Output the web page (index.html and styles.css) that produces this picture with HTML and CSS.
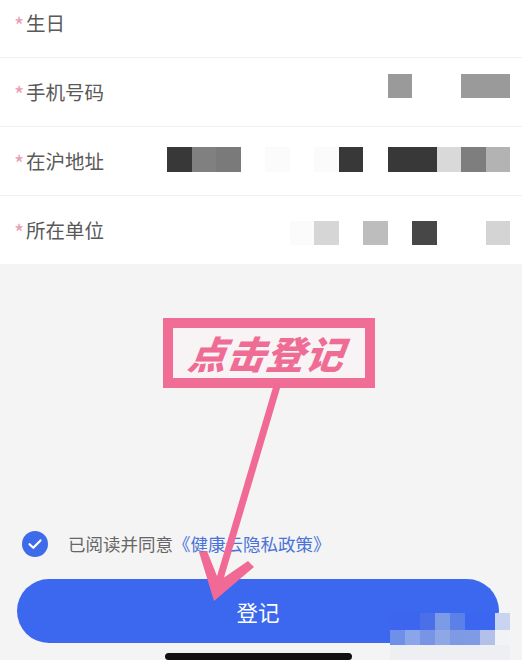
FILE: index.html
```html
<!DOCTYPE html>
<html lang="zh-CN">
<head>
<meta charset="utf-8">
<title>登记</title>
<link rel="stylesheet" href="styles.css">
</head>
<body>
<div class="page">
  <div class="form">
    <div class="row">
      <div class="label"><span class="req">*</span>生日</div>
    </div>
    <div class="row">
      <div class="label"><span class="req">*</span>手机号码</div>
      <div class="cells cells-r2">
        <i></i><i></i><i></i><i></i><i></i><i></i><i></i><i></i><i></i><i class="g9a"></i><i></i><i></i><i class="g9a"></i><i class="g9a"></i>
      </div>
    </div>
    <div class="row">
      <div class="label"><span class="req">*</span>在沪地址</div>
      <div class="cells cells-r3">
        <i class="g38"></i><i class="g80"></i><i class="g7a"></i><i></i><i class="gfa"></i><i></i><i class="gfa"></i><i class="g38"></i><i></i><i class="g38"></i><i class="g38"></i><i class="gd9"></i><i class="g7e"></i><i class="gb3"></i>
      </div>
    </div>
    <div class="row">
      <div class="label"><span class="req">*</span>所在单位</div>
      <div class="cells cells-r4">
        <i></i><i></i><i></i><i></i><i></i><i class="gfa"></i><i class="gd6"></i><i></i><i class="gbd"></i><i></i><i class="g47"></i><i></i><i></i><i class="gd4"></i>
      </div>
    </div>
  </div>

  <div class="agree">
    <span class="check">
      <svg viewBox="0 0 26 26" width="26" height="26"><circle cx="13" cy="13" r="13" fill="#3e6be9"/><path d="M7.5 13.2l3.8 3.6 7.2-7.4" fill="none" stroke="#fff" stroke-width="2.2" stroke-linecap="round" stroke-linejoin="round"/></svg>
    </span>
    <span class="agree-text">已阅读并同意<a class="link">《健康云隐私政策》</a></span>
  </div>

  <div class="btn">登记</div>
  <div class="home"></div>

  <div class="callout"><span>点击登记</span></div>

  <div class="mosaic">
    <i class="b1"></i><i class="b1"></i><i class="b2"></i><i class="b3"></i><i class="b4"></i><i class="b1"></i><i class="b1"></i><i class="b5"></i><i></i>
    <i class="c1"></i><i class="c2"></i><i class="c3"></i><i class="c4"></i><i class="c5"></i><i class="c6"></i><i class="c7"></i><i class="c8"></i><i></i>
    <i class="d1"></i><i class="d1"></i><i class="d1"></i><i class="d1"></i><i class="d1"></i><i class="d1"></i><i class="d1"></i><i class="d1"></i><i></i>
  </div>

  <svg class="arrow" viewBox="0 0 522 660" width="522" height="660">
    <line x1="277" y1="386" x2="216" y2="592" stroke="#f06a95" stroke-width="7" stroke-linecap="round"/>
    <polygon points="199,552 207,551 219,581 248,561 254,567 214,601" fill="#f06a95"/>
  </svg>
</div>
</body>
</html>
```
FILE: styles.css
```css
* { box-sizing: border-box; }
html, body { margin: 0; padding: 0; }
body {
  width: 522px;
  height: 660px;
  overflow: hidden;
  background: #f4f4f4;
  font-family: "Noto Sans CJK SC", "Noto Sans", sans-serif;
}
.page {
  position: relative;
  width: 522px;
  height: 660px;
  display: flex;
  flex-direction: column;
}
.form {
  background: #ffffff;
  margin-top: -11px;
}
.row {
  height: 69px;
  display: flex;
  align-items: center;
  padding-left: 14px;
  border-bottom: 1px solid #f0f0f0;
}
.row:last-child { border-bottom: none; height: 68px; }
.label {
  width: 153px;
  flex: none;
  font-size: 19.5px;
  color: #595959;
  display: flex;
  align-items: center;
  line-height: 1;
}
.req {
  color: #eb9db3;
  font-size: 22px;
  width: 12px;
  line-height: 1;
  margin-top: 2px;
}
.cells {
  display: flex;
}
.cells i {
  display: block;
  width: 24.5px;
  height: 24.5px;
}
.cells-r2 { margin-top: -12px; }
.cells-r3 { margin-top: -3px; }
.cells-r4 { margin-top: 6px; }
.g9a { background: #9a9a9a; }
.g38 { background: #383838; }
.g80 { background: #808080; }
.g7a { background: #7a7a7a; }
.gfa { background: #fbfbfb; }
.gd9 { background: #d9d9d9; }
.g7e { background: #7e7e7e; }
.gb3 { background: #b3b3b3; }
.gd6 { background: #d6d6d6; }
.gbd { background: #bdbdbd; }
.g47 { background: #474747; }
.gd4 { background: #d4d4d4; }

.agree {
  margin-top: 267px;
  height: 26px;
  display: flex;
  align-items: center;
  padding-left: 22px;
}
.check { width: 26px; height: 26px; display: block; }
.check svg { display: block; }
.agree-text {
  margin-left: 20px;
  font-size: 17.5px;
  color: #666666;
  line-height: 1;
}
.link { color: #4a72d9; }

.btn {
  margin: 22px 0 0 17px;
  width: 482px;
  height: 65px;
  border-radius: 33px;
  background: #3c68ef;
  color: #ffffff;
  font-size: 21.5px;
  display: flex;
  align-items: center;
  justify-content: center;
}
.home {
  margin: 10px 0 0 165px;
  width: 187px;
  height: 7px;
  border-radius: 4px;
  background: #111111;
}

.callout {
  position: absolute;
  left: 163px;
  top: 318px;
  width: 212px;
  height: 70px;
  border: 10px solid #f06d95;
  background: #f8f3f4;
  display: flex;
  align-items: center;
  justify-content: center;
}
.callout span {
  font-size: 38px;
  font-weight: 900;
  font-style: italic;
  color: #ef6c94;
  line-height: 1;
  letter-spacing: 1px;
  transform: skewX(-8deg);
  display: block;
  margin-left: -4px;
}

.mosaic {
  position: absolute;
  left: 390px;
  top: 613px;
  display: grid;
  grid-template-columns: repeat(9, 15px);
  grid-template-rows: 17px 15px 15px;
}
.mosaic i { display: block; }
.b1 { background: #3c66ef; }
.b2 { background: #4b6fe8; }
.b3 { background: #7b9be6; }
.b4 { background: #5b80e8; }
.b5 { background: #c9d5f0; }
.c1 { background: #6e90e9; }
.c2 { background: #8aa5e9; }
.c3 { background: #7894e4; }
.c4 { background: #8ea8e6; }
.c5 { background: #7f9ae5; }
.c6 { background: #809be6; }
.c7 { background: #b2c1e9; }
.c8 { background: #f2f3f6; }
.d1 { background: #edeff2; }

.arrow {
  position: absolute;
  left: 0;
  top: 0;
  pointer-events: none;
}
```
